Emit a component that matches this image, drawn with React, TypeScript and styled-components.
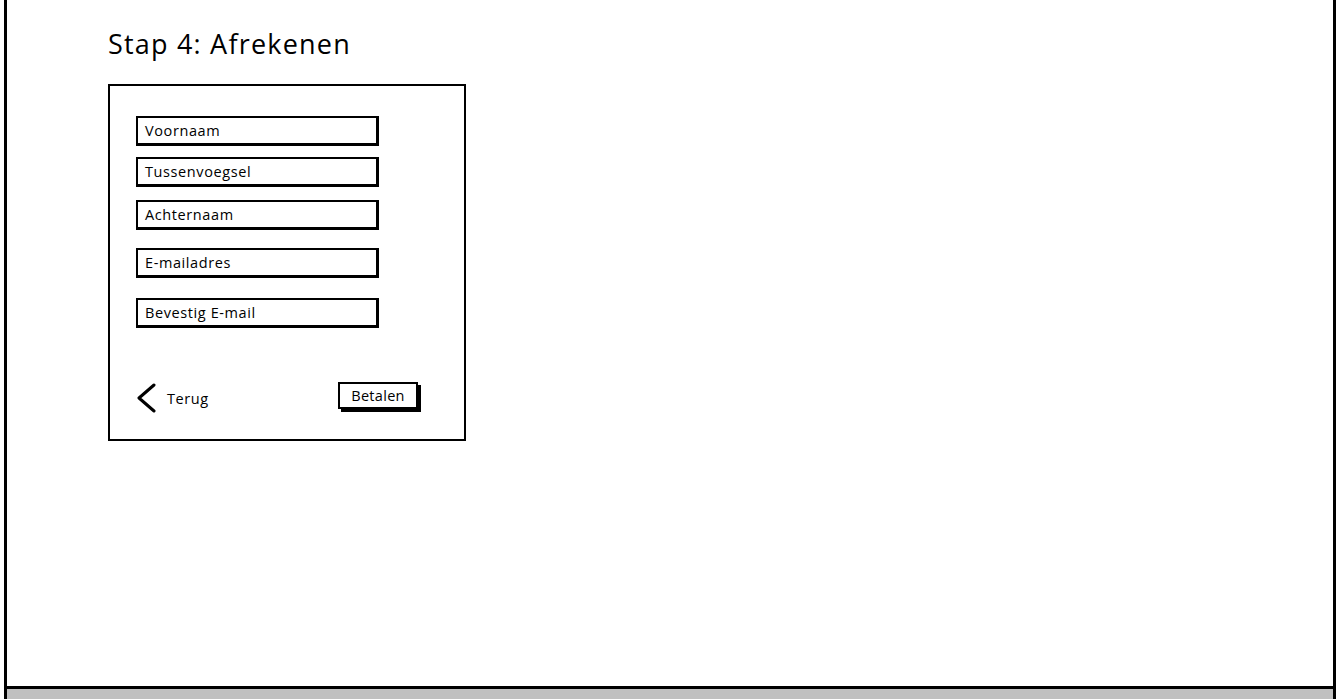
import styled, { createGlobalStyle } from "styled-components";

const GlobalStyle = createGlobalStyle`
  html, body {
    margin: 0;
    padding: 0;
    background: #ffffff;
  }
  body {
    font-family: "Open Sans", "Lato", sans-serif;
    color: #000000;
  }
`;

const Page = styled.div`
  height: 699px;
  display: flex;
  flex-direction: column;
  padding: 0 5px 0 4px;
  box-sizing: border-box;
`;

const Frame = styled.div`
  flex: 1;
  display: flex;
  flex-direction: column;
  border-left: 3px solid #000;
  border-right: 3px solid #000;
`;

const Content = styled.main`
  flex: 1;
  padding: 26px 0 0 101px;
`;

const BottomBar = styled.div`
  height: 10px;
  background: #c0c0c0;
  border-top: 3px solid #000;
`;

const Title = styled.h1`
  margin: 0;
  font-size: 27px;
  font-weight: 500;
  line-height: 36px;
  letter-spacing: 1.2px;
`;

const Card = styled.section`
  margin-top: 22px;
  width: 358px;
  height: 357px;
  border: 2px solid #000;
  padding: 30px 0 0 26px;
  box-sizing: border-box;
  display: flex;
  flex-direction: column;
`;

const Field = styled.div<{ $gap: number }>`
  margin-top: ${(p) => p.$gap}px;
  width: 243px;
  height: 30px;
  box-sizing: border-box;
  border: 2px solid #000;
  border-right-width: 3px;
  border-bottom-width: 3px;
  padding: 3px 0 0 7px;
  font-size: 14.5px;
  font-weight: 500;
  line-height: 19px;
  letter-spacing: 0.6px;
`;

const Footer = styled.div`
  margin-top: auto;
  margin-bottom: 26px;
  margin-right: 46px;
  display: flex;
  align-items: center;
  justify-content: space-between;
`;

const Back = styled.div`
  display: flex;
  align-items: center;
  gap: 10px;
  font-size: 14.5px;
  font-weight: 500;
  letter-spacing: 0.6px;
  padding-top: 2px;
`;

const PayButton = styled.div`
  width: 80px;
  height: 27px;
  box-sizing: border-box;
  border: 2px solid #000;
  box-shadow: 3px 3px 0 #000;
  display: flex;
  align-items: center;
  justify-content: center;
  font-size: 14.5px;
  font-weight: 500;
  letter-spacing: 0.3px;
  margin-bottom: 3px;
`;

const Chevron = () => (
  <svg width="21" height="30" viewBox="0 0 21 30">
    <polyline
      points="18,2 3,15 18,28"
      fill="none"
      stroke="#000"
      strokeWidth="3"
      strokeLinecap="round"
      strokeLinejoin="round"
    />
  </svg>
);

const fields = [
  { label: "Voornaam", gap: 0 },
  { label: "Tussenvoegsel", gap: 11 },
  { label: "Achternaam", gap: 13 },
  { label: "E-mailadres", gap: 18 },
  { label: "Bevestig E-mail", gap: 20 },
];

export default function App() {
  return (
    <>
      <GlobalStyle />
      <Page>
        <Frame>
          <Content>
            <Title>Stap 4: Afrekenen</Title>
            <Card>
              {fields.map((f) => (
                <Field key={f.label} $gap={f.gap}>
                  {f.label}
                </Field>
              ))}
              <Footer>
                <Back>
                  <Chevron />
                  Terug
                </Back>
                <PayButton>Betalen</PayButton>
              </Footer>
            </Card>
          </Content>
          <BottomBar />
        </Frame>
      </Page>
    </>
  );
}
